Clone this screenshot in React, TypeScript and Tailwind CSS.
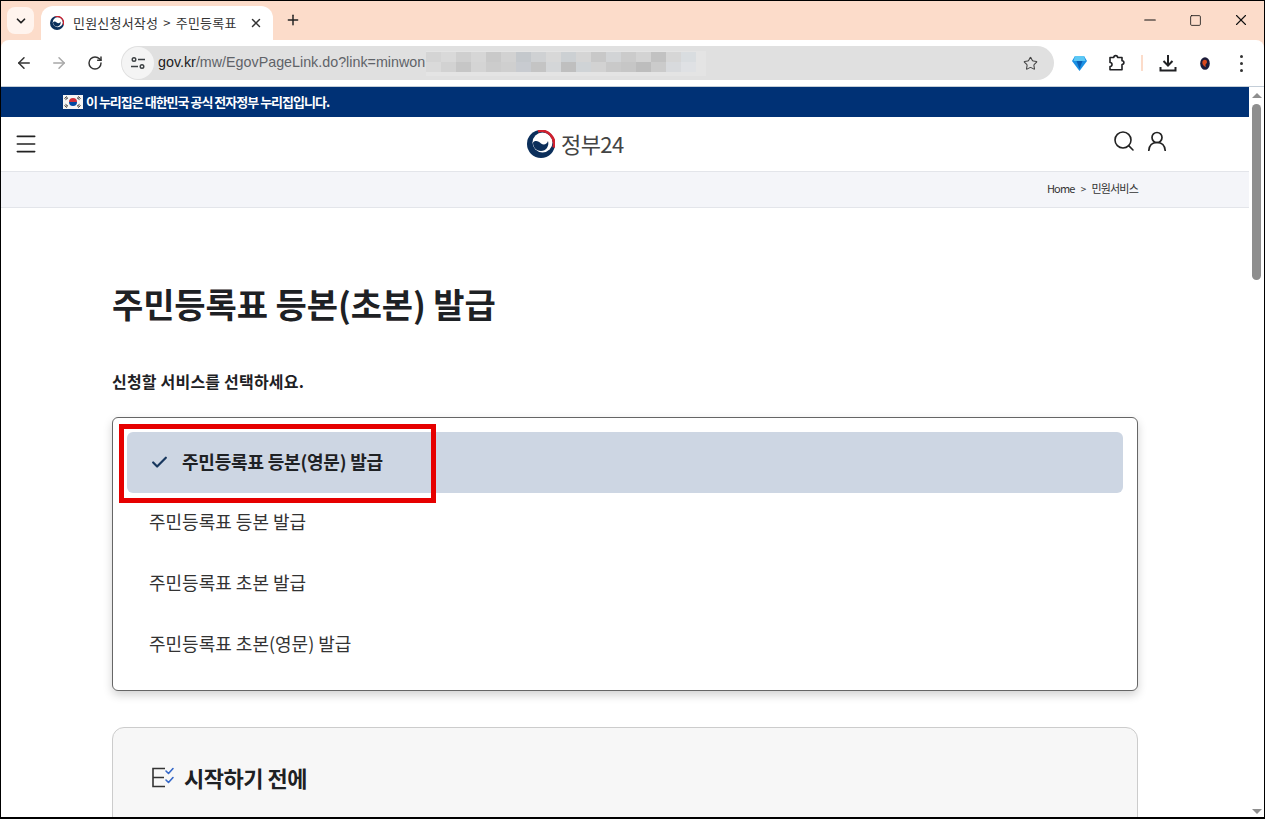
import { ArrowLeft, ArrowRight, Check, ChevronDown, Menu, Minus, Plus, RotateCw, Search, Square, Star, X } from "lucide-react";

const mosaic = [
  "#d4d4d4", "#d9d9d9", "#cfcfcf", "#d6d6d6", "#c9c9c9", "#d2d2d2", "#c4c8cc", "#cfd1d3", "#d8d8d8", "#ccd0d3",
  "#d5d5d5", "#c8c8c8", "#d2d4d6", "#cbcbcb", "#d3d3d3", "#c2c2c2", "#d6d6d6", "#d9dde0",
];

const mosaicLower = [
  "#dadada", "#d2d2d2", "#c6c6c6", "#d4d4d4", "#cccccc", "#cfcfcf", "#c8cbd0", "#c4c4c4", "#d4d6d8", "#bfbfbf",
  "#cfd3d6", "#d2d2d2", "#c9c9c9", "#c6c6c6", "#bdbdbd", "#cbcbcb", "#d8dadd", "#dfe1e4",
];

const services = ["주민등록표 등본 발급", "주민등록표 초본 발급", "주민등록표 초본(영문) 발급"];

function Taegeuk({ size }: { size: number }) {
  return (
    <svg width={size} height={size} viewBox="0 0 28 28" className="shrink-0">
      <circle cx="14" cy="14" r="14" fill="#0b2f5b" />
      <circle cx="15.5" cy="12.5" r="10" fill="#fff" />
      <path d="M6 12.5C9 9.5 12 12 14 13.5c3 2 6 .5 7-2.500 1.500 5-2 10-7 10-5 0-8-4-8-8.500z" fill="#0b2f5b" />
      <path d="M11 1.200a13 13 0 0 1 15.600 16.300" fill="none" stroke="#d0202e" strokeWidth="2.600" />
    </svg>
  );
}

function Flag() {
  return (
    <svg width="20" height="14" viewBox="0 0 20 14" className="shrink-0">
      <rect width="20" height="14" fill="#f4f4f4" />
      <path d="M6 7a4 4 0 0 1 8 0z" fill="#cd2e3a" />
      <path d="M6 7a4 4 0 0 0 8 0z" fill="#0047a0" />
      <path d="M1.500 3.500l2.500-2M2.500 4.700l2.500-2M15 1.500l2.500 2M14 2.700l2.500 2M1.500 10.500l2.500 2M2.500 9.300l2.500 2M15 12.500l2.500-2M14 11.300l2.500-2" stroke="#222" strokeWidth="1" />
    </svg>
  );
}

function TuneIcon() {
  return (
    <svg width="16" height="16" viewBox="0 0 16 16" fill="none" stroke="#3c4043" strokeWidth="1.400">
      <circle cx="4" cy="4.500" r="1.800" />
      <path d="M8 4.500h7M1 11.500h7" />
      <circle cx="12" cy="11.500" r="1.800" />
    </svg>
  );
}

function ExtensionIcon() {
  return (
    <svg width="18" height="18" viewBox="0 0 18 18" fill="none" stroke="#202124" strokeWidth="1.600" strokeLinejoin="round">
      <path d="M3 3.500h3.800a1.900 1.900 0 0 1 3.800 0H15v3.200a1.900 1.900 0 0 1 0 3.800v5.300H3v-3.300a2 2 0 0 0 0-4z" />
    </svg>
  );
}

function DownloadIcon() {
  return (
    <svg width="18" height="18" viewBox="0 0 18 18" fill="none" stroke="#202124" strokeWidth="2">
      <path d="M9 1v10M4.500 7L9 11.500 13.500 7M1.500 13v3.500h15V13" />
    </svg>
  );
}

function Gem() {
  return (
    <svg width="15" height="16" viewBox="0 0 15 16">
      <path d="M3 1h9l3 5-7.500 10L0 6z" fill="#1a8fe3" />
      <path d="M3 1h9l1.500 5h-12z" fill="#5cc8f5" />
      <path d="M4.500 6h6l-3 8z" fill="#0a5fb5" />
    </svg>
  );
}

function ProfileDot() {
  return (
    <svg width="10" height="13" viewBox="0 0 10 13">
      <ellipse cx="5" cy="6.500" rx="4.800" ry="6.300" fill="#1c1c3a" />
      <path d="M3 3.500c2-1.500 4-.5 4 1.500S4.500 6.500 6 10C2.500 9 1.500 5 3 3.500z" fill="#d9481c" />
    </svg>
  );
}

function UserIcon() {
  return (
    <svg width="20" height="20" viewBox="0 0 20 20" fill="none" stroke="#222" strokeWidth="1.700" strokeLinecap="round">
      <circle cx="10" cy="6.500" r="5" />
      <path d="M1.800 19.500c.4-5 3.600-8 8.200-8s7.800 3 8.200 8" />
    </svg>
  );
}

function ChecklistIcon() {
  return (
    <svg width="24" height="24" viewBox="0 0 24 24" fill="none" strokeWidth="1.600">
      <path d="M14 3.500H2v18h12M2 12.500h11" stroke="#333" />
      <path d="M15 6l2.500 2.500L22 3.500M15 15l2.500 2.500L22 12.500" stroke="#3568c9" strokeLinecap="round" strokeLinejoin="round" />
    </svg>
  );
}

export default function App() {
  return (
    <div className="relative w-[1265px] h-[819px] overflow-hidden border border-black border-b-2 bg-white flex flex-col font-['Noto_Sans_CJK_KR',sans-serif] text-[#1e2124]">
      {/* Tab strip */}
      <div className="h-[39px] shrink-0 bg-[#fcdcca] flex items-end pl-[6px]">
        <div className="w-[27px] h-[27px] mb-[6px] rounded-lg bg-[#fff4ee] flex items-center justify-center">
          <ChevronDown size={14} strokeWidth={3} color="#222" />
        </div>
        <div className="ml-[7px] w-[232px] h-[34px] bg-white rounded-t-xl flex items-center pl-[9px] pr-[10px]">
          <Taegeuk size={14} />
          <span className="ml-[9px] text-[13px] tracking-[0.2px] text-[#333] whitespace-nowrap">
            민원신청서작성<span className="mx-[2px]"> &gt; </span>주민등록표
          </span>
          <X size={14} strokeWidth={2.500} color="#333" className="ml-auto" />
        </div>
        <Plus size={16} strokeWidth={2.200} color="#222" className="ml-[12px] mb-[12px]" />
        <div className="ml-auto flex items-center mb-[11px] pr-[14px] gap-[30px]">
          <Minus size={18} strokeWidth={1.500} color="#111" />
          <Square size={13} strokeWidth={1.500} color="#111" />
          <X size={18} strokeWidth={1.500} color="#111" />
        </div>
      </div>

      {/* Toolbar */}
      <div className="h-[47px] shrink-0 bg-[#fcdcca]">
        <div className="h-full bg-white rounded-tl-lg rounded-tr-lg border-b border-[#c4ced8] flex items-center pl-[14px]">
          <ArrowLeft size={18} strokeWidth={2} color="#333" />
          <ArrowRight size={18} strokeWidth={2} color="#a8a8a8" className="ml-[17px]" />
          <RotateCw size={16} strokeWidth={2.200} color="#333" className="ml-[19px]" />
          <div className="ml-[18px] w-[933px] h-[34px] rounded-full bg-[#e0e0e0] flex items-center relative">
            <div className="ml-[1px] w-[32px] h-[32px] rounded-full bg-[#f4f4f4] flex items-center justify-center">
              <TuneIcon />
            </div>
            <span className="ml-[4px] text-[14.3px] text-[#202124] font-['Liberation_Sans',sans-serif] whitespace-nowrap">
              gov.kr<span className="text-[#5f6368]">/mw/EgovPageLink.do?link=minwon</span>
            </span>
            <svg width="280" height="25" viewBox="0 0 280 25" className="absolute left-[305px] top-[5px]">
              <rect width="280" height="25" fill="#e4e4e4" />
              {mosaic.map((c, i) => (
                <rect key={i} x={i * 15} y="1" width="15" height="10" fill={c} />
              ))}
              {mosaicLower.map((c, i) => (
                <rect key={i} x={i * 15} y="11" width="15" height="10" fill={c} />
              ))}
            </svg>
            <Star size={15} strokeWidth={1.700} color="#444" className="ml-auto mr-[16px]" />
          </div>
          <div className="ml-[18px]">
            <Gem />
          </div>
          <div className="ml-[20px]">
            <ExtensionIcon />
          </div>
          <div className="ml-[16px] w-[2px] h-[16px] bg-[#fcdcca]" />
          <div className="ml-[16px]">
            <DownloadIcon />
          </div>
          <div className="ml-[23px]">
            <ProfileDot />
          </div>
          <div className="ml-[30px] flex flex-col gap-[4px]">
            <div className="w-[3px] h-[3px] rounded-full bg-[#333]" />
            <div className="w-[3px] h-[3px] rounded-full bg-[#333]" />
            <div className="w-[3px] h-[3px] rounded-full bg-[#333]" />
          </div>
        </div>
      </div>

      {/* Viewport */}
      <div className="flex-1 flex min-h-0">
        <div className="flex-1 min-w-0 flex flex-col overflow-hidden">
          <div className="h-[30px] shrink-0 bg-[#003175] flex items-center pl-[62px] gap-[3px]">
            <Flag />
            <span className="text-[13px] font-bold text-white tracking-[-1px]">이 누리집은 대한민국 공식 전자정부 누리집입니다.</span>
          </div>

          <div className="h-[54px] shrink-0 flex items-center pl-[12px] pr-[82px]">
            <Menu size={26} strokeWidth={1.500} color="#222" />
            <div className="ml-[488px] flex items-center gap-[6px]">
              <Taegeuk size={28} />
              <span className="mb-[2px] text-[22px] leading-none text-[#444] tracking-[-0.6px]">정부24</span>
            </div>
            <div className="ml-auto mb-[6px] flex items-center gap-[11px]">
              <Search size={24} strokeWidth={1.600} color="#222" />
              <UserIcon />
            </div>
          </div>

          <div className="h-[37px] shrink-0 bg-[#f4f5f9] border-y border-[#e3e5ea] flex items-center justify-end pr-[111px] pb-[2px] gap-[6px] text-[11px] text-[#333] tracking-[-0.8px]">
            <span>Home</span>
            <span className="text-[10px]">&gt;</span>
            <span>민원서비스</span>
          </div>

          <div className="pl-[111px] pr-[111px] pt-[72px]">
            <h1 className="text-[34px] leading-[48px] font-bold text-[#1e2124] tracking-[-0.1px]">주민등록표 등본(초본) 발급</h1>
            <p className="mt-[41px] text-[16px] leading-[24px] font-bold tracking-[0.2px]">신청할 서비스를 선택하세요.</p>

            <div className="mt-[24px] h-[274px] border border-[#666] rounded-md shadow-[0_4px_10px_rgba(0,0,0,0.18)] p-[14px] bg-white">
              <div className="h-[61px] rounded-md bg-[#cdd6e3] flex items-center pl-[23px] gap-[13px]">
                <Check size={19} strokeWidth={2.800} color="#17375e" />
                <span className="pb-[2px] text-[18px] font-bold tracking-[-0.2px]">주민등록표 등본(영문) 발급</span>
              </div>
              {services.map((s) => (
                <div key={s} className="h-[61px] flex items-center pl-[22px] pb-[4px] text-[18px] text-[#333]">
                  {s}
                </div>
              ))}
            </div>

            <div className="mt-[36px] h-[140px] border border-[#ccc] rounded-xl bg-[#f7f7f7] pt-[33px] pl-[38px]">
              <div className="flex items-center gap-[9px]">
                <ChecklistIcon />
                <span className="text-[22px] leading-[32px] font-bold tracking-[-0.5px]">시작하기 전에</span>
              </div>
            </div>
          </div>
        </div>

        {/* Scrollbar */}
        <div className="w-[15px] shrink-0 bg-white flex flex-col items-center relative">
          <div className="mt-[6px] w-0 h-0 border-x-[5px] border-x-transparent border-b-[5px] border-b-[#8e8e8e]" />
          <div className="mt-[6px] w-[9px] h-[176px] rounded-full bg-[#8e8e8e]" />
          <div className="mt-auto mb-[3px] w-0 h-0 border-x-[5px] border-x-transparent border-t-[5px] border-t-[#8e8e8e]" />
        </div>
      </div>

      {/* Red annotation box */}
      <div className="absolute left-[118px] top-[423px] w-[317px] h-[79px] border-[5px] border-[#e60000]" />
    </div>
  );
}
